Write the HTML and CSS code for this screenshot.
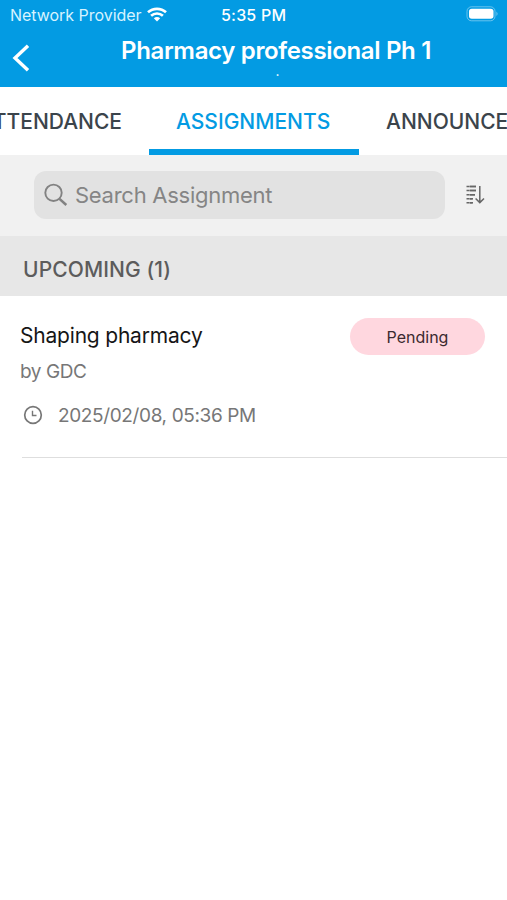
FILE: index.html
```html
<!DOCTYPE html>
<html lang="en">
<head>
<meta charset="utf-8">
<title>Assignments</title>
<link rel="stylesheet" href="styles.css">
</head>
<body>
<header class="header">
  <div class="status">
    <span class="carrier">Network Provider</span>
    <svg class="wifi" width="20" height="16" viewBox="0 0 20 16" fill="none" stroke="#fff" stroke-width="2.7">
      <path d="M1 6.3C6 1.7 14 1.7 19 6.3M4.1 9.8C7.5 6.7 12.5 6.7 15.9 9.8"/>
      <path d="M6.8 12.3Q10 9.6 13.2 12.3L10 15.6Z" fill="#fff" stroke="none"/>
    </svg>
    <span class="time">5:35 PM</span>
    <svg class="battery" width="33" height="16" viewBox="0 0 33 16">
      <rect x="1" y=".8" width="28" height="14" rx="4.5" fill="none" stroke="#fff" stroke-opacity=".4"/>
      <rect x="3" y="2.8" width="24.5" height="10" rx="2.8" fill="#fff"/>
      <path d="M30.5 5.5Q32.5 7.8 30.5 10Z" fill="#fff" fill-opacity=".5"/>
    </svg>
  </div>
  <div class="nav">
    <svg class="back" width="18" height="28" viewBox="0 0 18 28" fill="none" stroke="#fff" stroke-width="3.4"><path d="M16 1.8L3 14L16 26.2"/></svg>
    <div class="heading">
      <h1 class="title">Pharmacy professional Ph 1</h1>
      <div class="subtitle">.</div>
    </div>
  </div>
</header>
<nav class="tabs">
  <div class="tab tab-first"><span>ATTENDANCE</span></div>
  <div class="tab tab-active"><span>ASSIGNMENTS</span></div>
  <div class="tab tab-last"><span>ANNOUNCEMENTS</span></div>
</nav>
<div class="toolbar">
  <div class="search">
    <svg width="24" height="24" viewBox="0 0 24 24" fill="none" stroke="#828282" stroke-width="1.9"><circle cx="9.5" cy="9.8" r="8.2"/><path d="M15.5 15.8L22.3 22" stroke-width="2.5"/></svg>
    <span class="placeholder">Search Assignment</span>
  </div>
  <svg class="sort" width="19" height="20" viewBox="0 0 19 20" fill="none" stroke="#666" stroke-width="1.5">
    <path d="M.5 1.5H10M.5 5.6H10M.5 9.8H9M.5 13.8H7M.5 17.8H7" stroke-dasharray="2.6 .6 20"/>
    <path d="M3.5 1.5H10M3.5 5.6H10M3.5 9.8H9M3.5 13.8H6.5M3.5 17.8H6.5"/>
    <path d="M13.8 1V17.5M9.6 13.5L13.8 17.6L18 13.5"/>
  </svg>
</div>
<h2 class="section">UPCOMING (1)</h2>
<article class="item">
  <div class="row">
    <div class="name">Shaping pharmacy</div>
    <div class="badge"><span>Pending</span></div>
  </div>
  <div class="author">by GDC</div>
  <div class="due">
    <svg width="20" height="20" viewBox="0 0 20 20" fill="none" stroke="#777" stroke-width="1.7"><circle cx="10" cy="10" r="8.3"/><path d="M9.5 5.8V10.5H13.5" stroke-width="1.4"/></svg>
    <span class="date">2025/02/08, 05:36 PM</span>
  </div>
</article>
</body>
</html>
```
FILE: styles.css
```css
* { box-sizing: border-box; }
body { margin: 0; width: 507px; height: 900px; overflow: hidden; background: #fff; font-family: Inter, "Liberation Sans", sans-serif; white-space: nowrap; }
svg { display: block; flex: none; }
.header { height: 87px; background: #039be3; color: #fff; }
.status { display: flex; height: 30px; padding-left: 10px; font-size: 16px; line-height: 30px; }
.carrier { width: 137px; color: #d6f3ff; letter-spacing: -.03px; }
.wifi { margin-top: 6px; }
.time { margin-left: 54px; font-weight: 500; letter-spacing: .2px; }
.battery { margin: 6px 8px 0 auto; }
.nav { display: flex; padding-left: 12px; }
.back { margin-top: 14px; }
.heading { width: 311px; margin-left: 91px; }
.title { margin: 0; padding-top: 6px; font-size: 24px; line-height: 30px; font-weight: 600; letter-spacing: -.34px; }
.subtitle { margin-top: -3px; padding-left: 2px; font-size: 14px; line-height: 16px; text-align: center; }
.tabs { display: flex; height: 68px; overflow: hidden; color: #3b444b; font-size: 21px; font-weight: 550; line-height: 70px; }
.tab { flex: none; height: 68px; }
.tab-first { display: flex; width: 149px; padding-right: 27px; justify-content: flex-end; }
.tab-active { width: 210px; padding-left: 27px; color: #039be3; border-bottom: 6px solid #039be3; }
.tab-last { padding-left: 27px; }
.toolbar { display: flex; height: 81px; padding: 16px 22px 17px 34px; background: #f1f1f1; }
.search { display: flex; align-items: center; width: 411px; height: 48px; padding-left: 10px; border-radius: 12px; background: #e2e2e2; }
.placeholder { margin-left: 7px; color: #858585; font-size: 22px; letter-spacing: -.27px; }
.sort { margin: 14px 0 0 21px; }
.section { height: 60px; margin: 0; padding: 4px 0 0 23px; background: #e7e7e7; color: #5c5c5c; font-size: 21px; font-weight: 500; line-height: 60px; letter-spacing: .1px; }
.item { height: 162px; margin-left: 20px; padding-top: 22px; background: linear-gradient(#dedede, #dedede) 2px 100% / 100% 1px no-repeat; }
.row { display: flex; justify-content: space-between; height: 37px; padding-right: 22px; }
.name { color: #161616; font-size: 21px; line-height: 36px; letter-spacing: -.2px; }
.badge { width: 135px; height: 37px; border-radius: 19px; background: #ffd7df; color: #3b2a2f; font-size: 16px; line-height: 38px; text-align: center; }
.author { color: #777; font-size: 19px; line-height: 34px; letter-spacing: -.45px; }
.due { display: flex; align-items: center; height: 24px; margin: 14px 0 0 3px; }
.date { margin-left: 15px; color: #777; font-size: 19px; letter-spacing: -.37px; }
```
